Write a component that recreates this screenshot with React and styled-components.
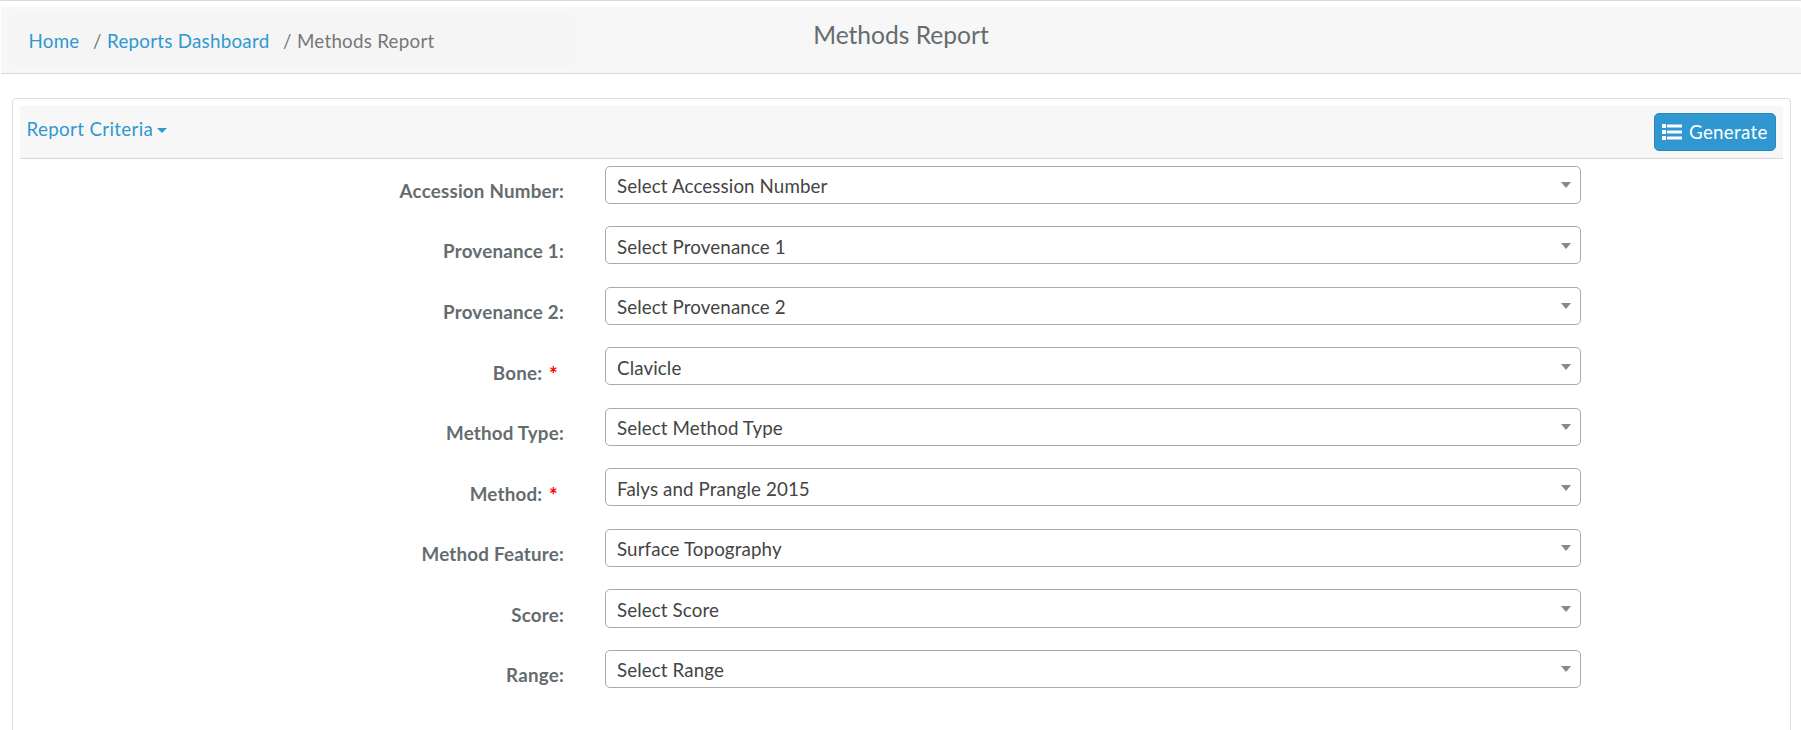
import React from 'react';
import styled, { createGlobalStyle } from 'styled-components';

const GlobalStyle = createGlobalStyle`
  *, *::before, *::after { box-sizing: border-box; }
  html, body { margin: 0; height: 100%; overflow: hidden; }
  body {
    background: #fff;
    color: #646c70;
    font-family: Lato, "Liberation Sans", sans-serif;
    font-size: 18.75px;
    line-height: 26px;
  }
`;

const Page = styled.div`
  height: 730px;
  overflow: hidden;
  border-top: 1px solid #ddd;
  padding-top: 6px;
`;

const Header = styled.header`
  display: grid;
  grid-template-columns: 568px 1fr 568px;
  height: 67px;
  margin-left: 1px;
  padding: 7px 7px 0 7px;
  background: #f7f7f7;
  border-bottom: 1px solid #d8d8d8;
  border-radius: 3px 3px 0 0;
`;

const Breadcrumb = styled.nav`
  display: flex;
  align-items: center;
  height: 52px;
  padding: 2px 20.5px 0;
  background: #f5f5f5;
  border-radius: 4px;
  letter-spacing: 0.26px;
  white-space: pre;
`;

const Link = styled.a`
  color: #3097d1;
  text-decoration: none;
`;

const Separator = styled.span`
  width: 15px;
  margin-left: 12.5px;
  padding-left: 1px;
  color: #777;
`;

const Current = styled.span`
  color: #777;
`;

const Title = styled.h1`
  margin: 7px 0 0;
  font-size: 24.6px;
  font-weight: 400;
  line-height: 27px;
  text-align: center;
`;

const Panel = styled.section`
  height: 700px;
  margin: 24px 10px 0 12px;
  padding: 7px;
  border: 1px solid #ddd;
  border-radius: 4px;
`;

const PanelHeading = styled.div`
  display: flex;
  justify-content: space-between;
  align-items: flex-start;
  height: 53px;
  padding: 7px 7px 0 6.5px;
  background: #f7f7f7;
  border-bottom: 1px solid #d8d8d8;
  border-radius: 3px 3px 0 0;
`;

const Caret = styled.span`
  width: 0;
  height: 0;
  border-top: ${(p) => p.$height}px solid ${(p) => p.$color};
  border-left: 5px solid transparent;
  border-right: 5px solid transparent;
`;

const Toggle = styled.a`
  display: flex;
  align-items: center;
  gap: 4px;
  margin-top: 3px;
  color: #3097d1;
  letter-spacing: 0.34px;

  ${Caret} { margin-top: 2px; }
`;

const GenerateButton = styled.button`
  display: flex;
  align-items: center;
  gap: 7px;
  width: 122px;
  height: 38px;
  padding: 0 7px;
  color: #fff;
  background: #3097d1;
  border: 1px solid #2a88bd;
  border-radius: 5px;
  font: inherit;
  letter-spacing: 0.3px;
`;

const Form = styled.form`
  display: grid;
  grid-auto-rows: 60.52px;
  padding-top: 6.8px;
`;

const Row = styled.div`
  display: grid;
  grid-template-columns: 544px 976px;
  column-gap: 41px;
  align-items: start;
`;

const Label = styled.label`
  padding-top: 12.17px;
  font-weight: 700;
  letter-spacing: 0.22px;
  text-align: right;
`;

const Required = styled.span`
  margin: 0 6px 0 6.7px;
  color: #f00;
  font-size: 20.5px;
  line-height: 0;
  vertical-align: -2px;
`;

const Select = styled.div`
  display: flex;
  justify-content: space-between;
  align-items: center;
  height: 38.12px;
  padding: 2.98px 9px 0 11px;
  color: #444;
  background: #fff;
  border: 1px solid #aaa;
  border-radius: 5px;
  letter-spacing: 0.11px;

  ${Caret} { margin-top: -2.5px; }
`;

const fields = [
  { label: 'Accession Number:', value: 'Select Accession Number' },
  { label: 'Provenance 1:', value: 'Select Provenance 1' },
  { label: 'Provenance 2:', value: 'Select Provenance 2' },
  { label: 'Bone:', value: 'Clavicle', required: true },
  { label: 'Method Type:', value: 'Select Method Type' },
  { label: 'Method:', value: 'Falys and Prangle 2015', required: true },
  { label: 'Method Feature:', value: 'Surface Topography' },
  { label: 'Score:', value: 'Select Score' },
  { label: 'Range:', value: 'Select Range' },
];

function ListIcon() {
  return (
    <svg width="20" height="16" viewBox="0 0 20 16" fill="currentColor" aria-hidden="true">
      {[0, 6, 12].map((y) => (
        <React.Fragment key={y}>
          <rect x="0" y={y} width="4" height="4" rx="0.6" />
          <rect x="5" y={y + 0.5} width="15" height="3" rx="0.4" />
        </React.Fragment>
      ))}
    </svg>
  );
}

export default function App() {
  return (
    <Page>
      <GlobalStyle />
      <Header>
        <Breadcrumb>
          <Link>Home</Link>
          <Separator>/</Separator>
          <Link>Reports Dashboard</Link>
          <Separator>/</Separator>
          <Current>Methods Report</Current>
        </Breadcrumb>
        <Title>Methods Report</Title>
      </Header>
      <Panel>
        <PanelHeading>
          <Toggle>
            Report Criteria
            <Caret $color="#3097d1" $height={5} />
          </Toggle>
          <GenerateButton type="button">
            <ListIcon />
            Generate
          </GenerateButton>
        </PanelHeading>
        <Form>
          {fields.map((f) => (
            <Row key={f.label}>
              <Label>
                {f.label}
                {f.required && <Required>*</Required>}
              </Label>
              <Select>
                {f.value}
                <Caret $color="#888" $height={6} />
              </Select>
            </Row>
          ))}
        </Form>
      </Panel>
    </Page>
  );
}
